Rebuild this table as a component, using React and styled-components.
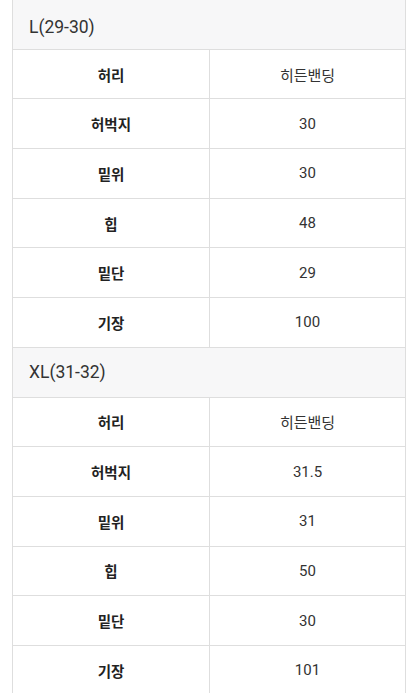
import styled, { createGlobalStyle } from "styled-components";

const GlobalStyle = createGlobalStyle`
  html, body {
    margin: 0;
    padding: 0;
    background: #fff;
  }
  body {
    font-family: Roboto, "Noto Sans CJK KR", sans-serif;
    color: #333;
  }
`;

const sizes = [
  {
    name: "L(29-30)",
    rows: [
      ["허리", "히든밴딩"],
      ["허벅지", "30"],
      ["밑위", "30"],
      ["힙", "48"],
      ["밑단", "29"],
      ["기장", "100"],
    ],
  },
  {
    name: "XL(31-32)",
    rows: [
      ["허리", "히든밴딩"],
      ["허벅지", "31.5"],
      ["밑위", "31"],
      ["힙", "50"],
      ["밑단", "30"],
      ["기장", "101"],
    ],
  },
];

const App = () => {
  return (
    <Page>
      <GlobalStyle />
      <Sheet>
        {sizes.map((size, i) => (
          <Section key={size.name}>
            <Header first={i === 0}>{size.name}</Header>
            {size.rows.map(([label, value]) => (
              <Row key={label}>
                <Cell bold>{label}</Cell>
                <Cell>{value}</Cell>
              </Row>
            ))}
          </Section>
        ))}
      </Sheet>
    </Page>
  );
};

const Page = styled.div`
  padding: 0 10px 0 12px;
  margin-top: -1px;
`;

const Sheet = styled.div`
  border-top: 1px solid #dedede;
  border-left: 1px solid #dedede;
  border-right: 1px solid #dedede;
`;

const Section = styled.section`
  display: flex;
  flex-direction: column;
`;

const Header = styled.div`
  box-sizing: border-box;
  height: 49.7px;
  display: flex;
  align-items: center;
  padding-left: 16px;
  padding-top: ${(p) => (p.first ? "5px" : "0")};
  background: #f7f7f8;
  border-bottom: 1px solid #dedede;
  font-size: 17.5px;
  color: #333;
`;

const Row = styled.div`
  box-sizing: border-box;
  height: 49.7px;
  display: grid;
  grid-template-columns: 196px 1fr;
  border-bottom: 1px solid #dedede;
`;

const Cell = styled.div`
  display: flex;
  align-items: center;
  justify-content: center;
  font-size: ${(p) => (p.bold ? "14.5px" : "15px")};
  font-weight: ${(p) => (p.bold ? 700 : 400)};
  color: ${(p) => (p.bold ? "#222" : "#333")};
  & + & {
    border-left: 1px solid #dedede;
  }
`;

export default App;
